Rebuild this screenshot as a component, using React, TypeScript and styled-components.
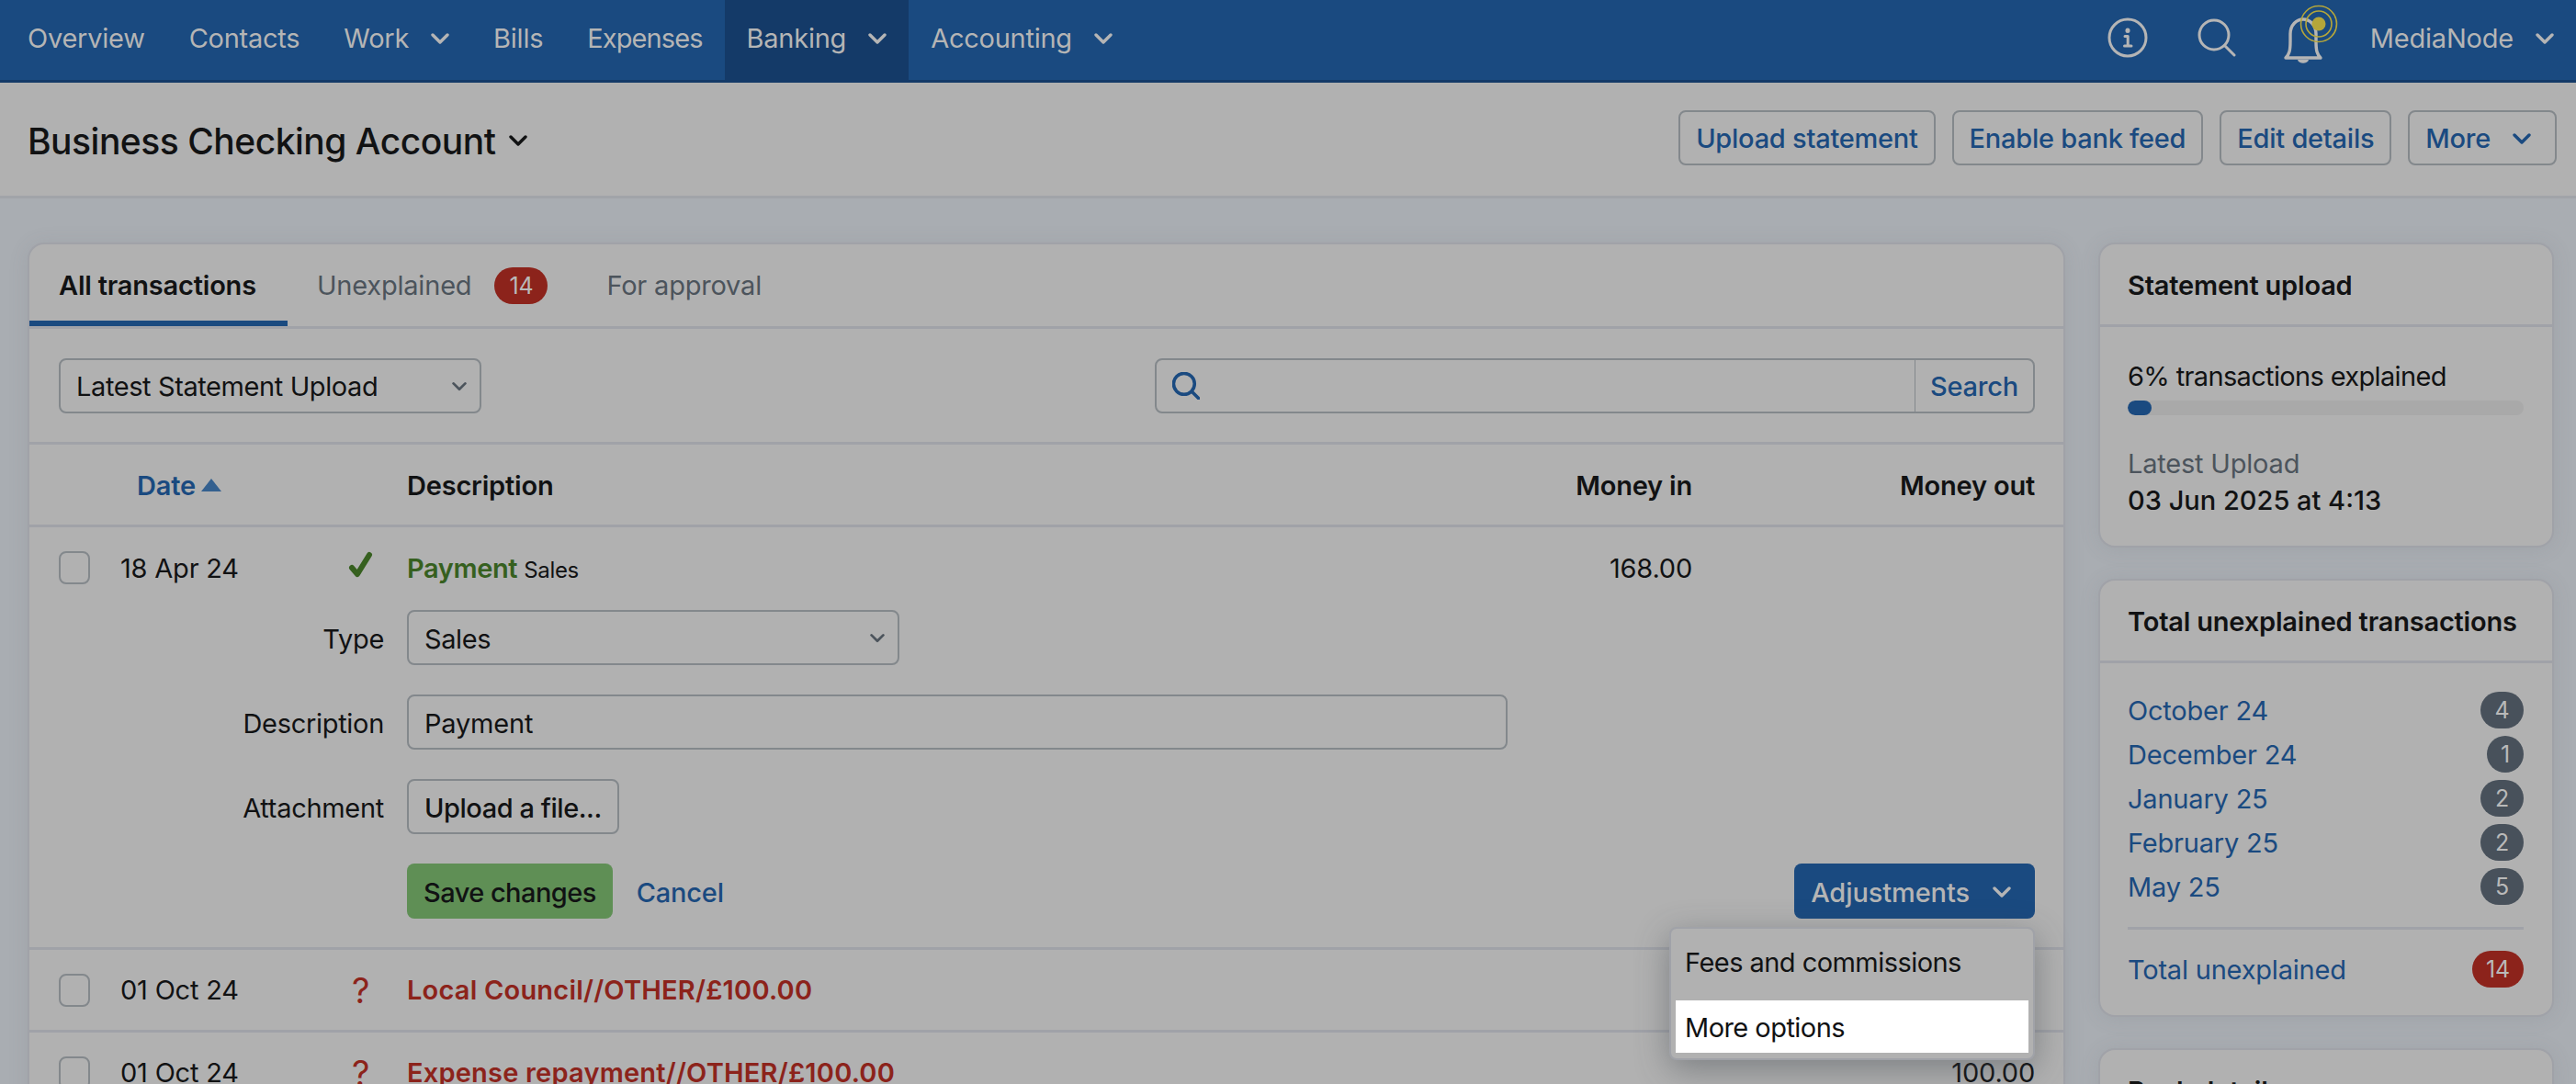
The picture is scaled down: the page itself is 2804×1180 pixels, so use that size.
import React, { FC, ReactNode } from 'react'
import styled, { createGlobalStyle } from 'styled-components'

const navy = '#1a4a80'
const ink = '#111213'
const red = '#8c231b'
const line = '#a0a2a8'
const field = '#83888c'

const Global = createGlobalStyle`
  html, body {
    margin: 0;
    height: 1180px;
    overflow: hidden;
    background: #a9adb2;
    font-family: Inter, "Liberation Sans", sans-serif;
    font-size: 29px;
    letter-spacing: -0.2px;
    color: ${ink};
  }
  * { box-sizing: border-box; }
`

const Page = styled.div`
  width: 2804px;
  height: 1180px;
  overflow: hidden;
`

const Nav = styled.nav`
  height: 90px;
  padding: 0 24px 0 6px;
  display: flex;
  justify-content: space-between;
  background: ${navy};
  border-bottom: 3px solid #143a68;
  color: #b5b5b5;
`

const NavGroup = styled.div`
  display: flex;
  align-items: stretch;
`

const NavItem = styled.a<{ $active?: boolean; $tight?: boolean }>`
  padding: 0 24px 4px;
  display: flex;
  align-items: center;
  gap: 24px;
  letter-spacing: ${({ $tight }) => ($tight ? '-0.9px' : '-0.25px')};
  background: ${({ $active }) => ($active ? '#143a68' : 'transparent')};
`

const NavIcons = styled.div`
  display: flex;
  align-items: center;
  gap: 54px;
  padding-bottom: 6px;
`

const Account = styled.div`
  margin-left: -6px;
  padding-top: 2px;
  display: flex;
  align-items: center;
  gap: 24px;
`

const SubHeader = styled.header`
  height: 126px;
  padding: 0 21px 0 30px;
  display: flex;
  align-items: center;
  justify-content: space-between;
  background: #b1b1b1;
  border-bottom: 3px solid #a1a4a9;
`

const Title = styled.h1`
  margin: 0;
  padding-top: 3px;
  display: flex;
  align-items: center;
  gap: 15px;
  font-size: 39px;
  font-weight: 500;
  letter-spacing: -0.5px;
`

const Actions = styled.div`
  padding-bottom: 4px;
  display: flex;
  gap: 18px;
`

const OutlineButton = styled.button<{ $ink?: boolean; $caret?: boolean }>`
  height: 60px;
  padding: ${({ $caret }) => ($caret ? '2px 26px 0 17px' : '2px 17px 0')};
  display: inline-flex;
  align-items: center;
  gap: 24px;
  background: transparent;
  border: 2px solid ${field};
  border-radius: 8px;
  color: ${({ $ink }) => ($ink ? ink : navy)};
  font: 500 29px Inter, "Liberation Sans", sans-serif;
  letter-spacing: ${({ $ink }) => ($ink ? '-0.45px' : '-0.25px')};
`

const Content = styled.main`
  padding: 48px 24px 0 30px;
  display: grid;
  grid-template-columns: 2218px 496px;
  gap: 36px;
  align-items: start;
`

const Card = styled.section`
  position: relative;
  background: #b1b1b1;
  border: 2px solid ${line};
  border-radius: 18px;
  box-shadow: 0 2px 22px rgba(90, 95, 105, 0.12);
`

const Tabs = styled.div`
  height: 92px;
  display: flex;
  border-bottom: 3px solid ${line};
`

const Tab = styled.div<{ $active?: boolean }>`
  height: 89px;
  padding: 6px ${({ $active }) => ($active ? 34 : 32)}px 0 32px;
  display: flex;
  align-items: center;
  gap: 25px;
  color: ${({ $active }) => ($active ? ink : '#4c545c')};
  font-weight: ${({ $active }) => ($active ? 600 : 400)};
  border-bottom: ${({ $active }) => ($active ? `6px solid ${navy}` : '6px solid transparent')};
`

const Pill = styled.span<{ $red?: boolean; $min?: number }>`
  min-width: ${({ $min }) => $min ?? 40}px;
  height: 40px;
  padding: 0 12px;
  display: inline-flex;
  align-items: center;
  justify-content: center;
  border-radius: 20px;
  background: ${({ $red }) => ($red ? red : '#48515b')};
  color: #b9b9b9;
  font-size: 25px;
  font-weight: 400;
`

const Filters = styled.div`
  height: 126px;
  padding: 0 31px 0 32px;
  display: flex;
  align-items: center;
  justify-content: space-between;
  border-bottom: 3px solid ${line};
`

const SelectBox = styled.div<{ $width: number }>`
  width: ${({ $width }) => $width}px;
  height: 60px;
  padding: 2px 14px 0 17px;
  display: flex;
  align-items: center;
  justify-content: space-between;
  border: 2px solid ${field};
  border-radius: 8px;
  letter-spacing: -0.4px;
`

const SearchBox = styled.div`
  width: 958px;
  height: 60px;
  display: flex;
  border: 2px solid ${field};
  border-radius: 8px;
`

const SearchInput = styled.div`
  flex: 1;
  padding-left: 17px;
  display: flex;
  align-items: center;
`

const SearchButton = styled.div`
  width: 129px;
  padding-top: 2px;
  display: flex;
  align-items: center;
  justify-content: center;
  border-left: 1px solid ${field};
  color: ${navy};
  font-weight: 500;
`

const Columns = styled.div`
  display: grid;
  grid-template-columns: 32px 34px 33px 248px 64px 1fr 202px 373px;
  padding-right: 31px;
  align-items: center;
`

const HeadRow = styled(Columns)`
  height: 90px;
  padding-top: 1px;
  border-bottom: 3px solid ${line};
  font-weight: 600;
`

const TxRow = styled(Columns)`
  height: 90px;
  border-bottom: 3px solid ${line};
`

const FirstRow = styled(Columns)`
  height: 88px;
`

const Slot = styled.div<{ $col: number; $right?: boolean }>`
  grid-column: ${({ $col }) => $col};
  text-align: ${({ $right }) => ($right ? 'right' : 'left')};
  white-space: nowrap;
`

const DateHead = styled(Slot)`
  padding-left: 18px;
  display: flex;
  align-items: center;
  gap: 6px;
  color: ${navy};
`

const Checkbox = styled.span`
  grid-column: 2;
  width: 34px;
  height: 36px;
  border: 2px solid ${field};
  border-radius: 8px;
`

const Mark = styled.span`
  padding-left: 4px;
  color: ${red};
  font-size: 38px;
  font-weight: 400;
`

const TxTitle = styled.span<{ $color: string; $tight?: boolean }>`
  color: ${({ $color }) => $color};
  font-weight: 600;
  letter-spacing: ${({ $tight }) => ($tight ? '-0.4px' : '0.2px')};
`

const Small = styled.span`
  margin-left: 7px;
  font-size: 24px;
  letter-spacing: -0.3px;
`

const EditForm = styled.div`
  padding: 2px 31px 31px 0;
  display: flex;
  flex-direction: column;
  gap: 32px;
  border-bottom: 3px solid ${line};
`

const FormRow = styled.div`
  display: grid;
  grid-template-columns: 386px 1fr;
  gap: 25px;
  align-items: center;
`

const FormLabel = styled.label`
  padding-top: 2px;
  text-align: right;
  letter-spacing: -0.3px;
`

const TextField = styled.div`
  width: 1198px;
  height: 60px;
  padding: 2px 17px 0;
  display: flex;
  align-items: center;
  border: 2px solid ${field};
  border-radius: 8px;
`

const FormActions = styled.div`
  margin-left: 411px;
  display: flex;
  align-items: center;
  gap: 26px;
`

const Solid = styled.button<{ $bg: string; $color: string; $caret?: boolean }>`
  height: 60px;
  padding: ${({ $caret }) => ($caret ? '2px 26px 0 18px' : '2px 18px 0')};
  display: inline-flex;
  align-items: center;
  gap: 25px;
  border: 0;
  border-radius: 8px;
  background: ${({ $bg }) => $bg};
  color: ${({ $color }) => $color};
  font: 500 29px Inter, "Liberation Sans", sans-serif;
  letter-spacing: ${({ $caret }) => ($caret ? '-0.1px' : '-0.55px')};
`

const TextLink = styled.a`
  padding-top: 2px;
  color: ${navy};
  font-weight: 500;
`

const Push = styled.div`
  margin-left: auto;
`

const Menu = styled.div`
  position: absolute;
  left: 1785px;
  top: 743px;
  width: 398px;
  height: 145px;
  padding: 6px 5px;
  background: #b1b1b1;
  border: 2px solid ${line};
  border-radius: 8px;
  box-shadow: 0 10px 36px rgba(60, 66, 74, 0.45);
  letter-spacing: -0.55px;
  z-index: 2;
`

const MenuItem = styled.div<{ $lit?: boolean }>`
  height: ${({ $lit }) => ($lit ? 57 : 72)}px;
  padding: ${({ $lit }) => ($lit ? '2px 0 0 10px' : '0 0 12px 10px')};
  display: flex;
  align-items: center;
  background: ${({ $lit }) => ($lit ? '#ffffff' : 'transparent')};
`

const Sidebar = styled.aside`
  display: flex;
  flex-direction: column;
  gap: 34px;
`

const CardHead = styled.h2`
  margin: 0;
  height: 90px;
  padding: 1px 30px 0;
  display: flex;
  align-items: center;
  border-bottom: 3px solid ${line};
  font-size: 29px;
  font-weight: 600;
  white-space: nowrap;
`

const UploadBody = styled.div`
  padding: 36px 31px 29px 30px;
`

const ExplainedLabel = styled.div`
  letter-spacing: -0.65px;
`

const ListBody = styled.div`
  padding: 27px 31px 26px 30px;
`

const Progress = styled.div`
  height: 16px;
  margin: 9px 0 33px;
  border-radius: 8px;
  background: #a9a9a9;
  overflow: hidden;
`

const ProgressFill = styled.div`
  height: 100%;
  border-radius: 8px;
  background: ${navy};
`

const Muted = styled.div`
  color: #4c545c;
  line-height: 40px;
`

const Strong = styled.div`
  font-weight: 500;
  line-height: 40px;
  letter-spacing: 0;
`

const ListRow = styled.div`
  height: 48px;
  display: flex;
  align-items: center;
  justify-content: space-between;
`

const ListLink = styled.a`
  padding-top: 1px;
  color: ${navy};
`

const Rule = styled.div`
  margin: 20px 0 19px;
  border-top: 3px solid ${line};
`

const Chevron: FC<{ size?: number; color?: string }> = ({ size = 20, color = 'currentColor' }) => (
  <svg width={size} height={size * 0.7} viewBox="0 0 20 14" fill="none">
    <path d="M2 3l8 8 8-8" stroke={color} strokeWidth="3.4" strokeLinecap="round" strokeLinejoin="round" />
  </svg>
)

const InfoIcon: FC = () => (
  <svg width="44" height="44" viewBox="0 0 44 44" fill="none" stroke="#b5b5b5">
    <circle cx="22" cy="22" r="20" strokeWidth="3" />
    <path d="M22 14v.6" strokeWidth="5" strokeLinecap="round" />
    <path d="M19 20.5h3.2V31M18.5 31h7.5" strokeWidth="3" strokeLinecap="round" strokeLinejoin="round" />
  </svg>
)

const SearchIcon: FC<{ color?: string; size?: number; weight?: number }> = ({ color = '#b5b5b5', size = 42, weight = 3 }) => (
  <svg width={size} height={size} viewBox="0 0 42 42" fill="none" stroke={color}>
    <circle cx="18" cy="18" r="16" strokeWidth={weight} />
    <path d="M29.5 29.5L40 40" strokeWidth={weight} strokeLinecap="round" />
  </svg>
)

const BellIcon: FC = () => (
  <svg width="44" height="64" viewBox="4 2 44 64" fill="none" overflow="visible">
    <path
      d="M4 56c4-4 5-8 5-18V30c0-10 7-16 14-16s14 6 14 16v8c0 10 1 14 5 18z"
      stroke="#b5b5b5"
      strokeWidth="3.4"
      strokeLinejoin="round"
    />
    <path d="M17 58c1 5 11 5 12 0z" fill="#b5b5b5" />
    <circle cx="40" cy="19" r="19.5" stroke="#b5a63a" strokeWidth="1.6" />
    <circle cx="40" cy="19" r="14" stroke="#b5a63a" strokeWidth="1.6" />
    <circle cx="40" cy="19" r="7.5" fill="#b5a63a" />
  </svg>
)

const Tick: FC = () => (
  <svg width="28" height="30" viewBox="0 0 28 30" fill="none">
    <path d="M4 18l6 7L23 4" stroke="#36601f" strokeWidth="6" strokeLinecap="round" strokeLinejoin="round" />
  </svg>
)

const SortUp: FC = () => (
  <svg width="22" height="14" viewBox="0 0 22 14">
    <path d="M11 0l11 14H0z" fill="#34608f" />
  </svg>
)

const months: [string, number, number][] = [
  ['October 24', 4, 47],
  ['December 24', 1, 40],
  ['January 25', 2, 47],
  ['February 25', 2, 47],
  ['May 25', 5, 47],
]

const FormLine: FC<{ label: string; children: ReactNode }> = ({ label, children }) => (
  <FormRow>
    <FormLabel>{label}</FormLabel>
    <div>{children}</div>
  </FormRow>
)

const App: FC = () => (
  <Page>
    <Global />
    <Nav>
      <NavGroup>
        <NavItem>Overview</NavItem>
        <NavItem>Contacts</NavItem>
        <NavItem>
          Work <Chevron />
        </NavItem>
        <NavItem>Bills</NavItem>
        <NavItem $tight>Expenses</NavItem>
        <NavItem $active>
          Banking <Chevron />
        </NavItem>
        <NavItem>
          Accounting <Chevron />
        </NavItem>
      </NavGroup>
      <NavIcons>
        <InfoIcon />
        <SearchIcon />
        <BellIcon />
        <Account>
          MediaNode <Chevron />
        </Account>
      </NavIcons>
    </Nav>

    <SubHeader>
      <Title>
        Business Checking Account <Chevron color={ink} />
      </Title>
      <Actions>
        <OutlineButton>Upload statement</OutlineButton>
        <OutlineButton>Enable bank feed</OutlineButton>
        <OutlineButton>Edit details</OutlineButton>
        <OutlineButton $caret>
          More <Chevron />
        </OutlineButton>
      </Actions>
    </SubHeader>

    <Content>
      <Card>
        <Tabs>
          <Tab $active>All transactions</Tab>
          <Tab>
            Unexplained <Pill $red $min={58}>14</Pill>
          </Tab>
          <Tab>For approval</Tab>
        </Tabs>
        <Filters>
          <SelectBox $width={460}>
            Latest Statement Upload <Chevron size={16} color="#4c545c" />
          </SelectBox>
          <SearchBox>
            <SearchInput>
              <SearchIcon color={navy} size={30} weight={5} />
            </SearchInput>
            <SearchButton>Search</SearchButton>
          </SearchBox>
        </Filters>
        <HeadRow>
          <DateHead $col={4}>
            Date <SortUp />
          </DateHead>
          <Slot $col={6}>Description</Slot>
          <Slot $col={7} $right>
            Money in
          </Slot>
          <Slot $col={8} $right>
            Money out
          </Slot>
        </HeadRow>
        <FirstRow>
          <Checkbox />
          <Slot $col={4}>18 Apr 24</Slot>
          <Slot $col={5}>
            <Tick />
          </Slot>
          <Slot $col={6}>
            <TxTitle $color="#36601f" $tight>
              Payment
            </TxTitle>
            <Small>Sales</Small>
          </Slot>
          <Slot $col={7} $right>
            168.00
          </Slot>
        </FirstRow>
        <EditForm>
          <FormLine label="Type">
            <SelectBox $width={536}>
              Sales <Chevron size={16} color="#4c545c" />
            </SelectBox>
          </FormLine>
          <FormLine label="Description">
            <TextField>Payment</TextField>
          </FormLine>
          <FormLine label="Attachment">
            <OutlineButton $ink>Upload a file...</OutlineButton>
          </FormLine>
          <FormActions>
            <Solid $bg="#5f8f55" $color={ink}>
              Save changes
            </Solid>
            <TextLink>Cancel</TextLink>
            <Push>
              <Solid $bg={navy} $color="#b5b5b5" $caret>
                Adjustments <Chevron />
              </Solid>
            </Push>
          </FormActions>
        </EditForm>
        <TxRow>
          <Checkbox />
          <Slot $col={4}>01 Oct 24</Slot>
          <Slot $col={5}>
            <Mark>?</Mark>
          </Slot>
          <Slot $col={6}>
            <TxTitle $color={red}>Local Council//OTHER/£100.00</TxTitle>
          </Slot>
        </TxRow>
        <TxRow>
          <Checkbox />
          <Slot $col={4}>01 Oct 24</Slot>
          <Slot $col={5}>
            <Mark>?</Mark>
          </Slot>
          <Slot $col={6}>
            <TxTitle $color={red}>Expense repayment//OTHER/£100.00</TxTitle>
          </Slot>
          <Slot $col={8} $right>
            100.00
          </Slot>
        </TxRow>
        <Menu>
          <MenuItem>Fees and commissions</MenuItem>
          <MenuItem $lit>More options</MenuItem>
        </Menu>
      </Card>

      <Sidebar>
        <Card>
          <CardHead>Statement upload</CardHead>
          <UploadBody>
            <ExplainedLabel>6% transactions explained</ExplainedLabel>
            <Progress>
              <ProgressFill style={{ width: '6%' }} />
            </Progress>
            <Muted>Latest Upload</Muted>
            <Strong>03 Jun 2025 at 4:13</Strong>
          </UploadBody>
        </Card>
        <Card>
          <CardHead>Total unexplained transactions</CardHead>
          <ListBody>
            {months.map(([month, count, width]) => (
              <ListRow key={month}>
                <ListLink>{month}</ListLink>
                <Pill $min={width}>{count}</Pill>
              </ListRow>
            ))}
            <Rule />
            <ListRow>
              <ListLink>Total unexplained</ListLink>
              <Pill $red $min={56}>
                14
              </Pill>
            </ListRow>
          </ListBody>
        </Card>
        <Card>
          <CardHead>Bank details</CardHead>
        </Card>
      </Sidebar>
    </Content>
  </Page>
)

export default App
